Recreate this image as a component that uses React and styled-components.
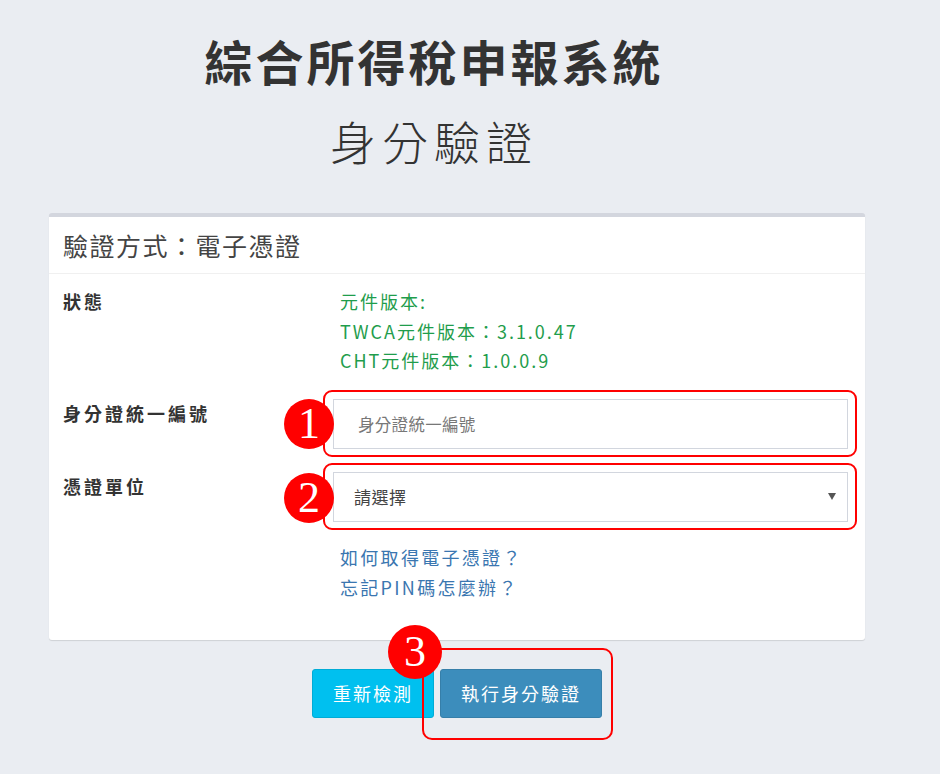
import { createGlobalStyle, styled } from "styled-components";

const GlobalStyle = createGlobalStyle`
    html, body {
        margin: 0;
        padding: 0;
        background: #eaedf2;
    }
    body {
        font-family: "Noto Sans CJK TC", "Noto Sans", "Liberation Sans", sans-serif;
        color: #333;
    }
`

const Page = styled.div`
    width: 816px;
    margin-left: 49px;
    padding-top: 30px;
    padding-bottom: 40px;
`

const Heading = styled.div`
    text-align: center;
    padding-right: 46px;
`

const Title = styled.h1`
    margin: 0;
    font-size: 48px;
    line-height: 60px;
    font-weight: 700;
    letter-spacing: 3px;
    color: #333;
`

const SubTitle = styled.h2`
    margin: 20px 0 0;
    font-size: 46px;
    line-height: 60px;
    font-weight: 300;
    letter-spacing: 6px;
    color: #333;
`

const Card = styled.div`
    margin-top: 43px;
    background: #fff;
    border-top: 4px solid #d3d6de;
    border-radius: 3px;
    box-shadow: 0 1px 1px rgba(0, 0, 0, 0.12);
`

const CardHeader = styled.div`
    height: 56px;
    display: flex;
    align-items: center;
    padding: 0 14px;
    border-bottom: 1px solid #f0f0f0;
    font-size: 25px;
    letter-spacing: 1.5px;
    color: #444;
`

const CardBody = styled.div`
    display: grid;
    grid-template-columns: 270px 1fr;
    row-gap: 23px;
    padding: 13px 17px 38px 14px;
`

const Label = styled.div`
    font-size: 18px;
    line-height: 29px;
    font-weight: 700;
    letter-spacing: 3px;
    color: #333;
`

const Static = styled.div`
    padding-left: 7px;
    font-size: 18px;
    line-height: 29.5px;
    letter-spacing: 2px;
    color: ${props => props.color || "#333"};
`

const Annotated = styled.div`
    position: relative;
    margin: -9px -9px -8px -10px;
    padding: 7px 7px 6px 8px;
    border: 2px solid #ff0000;
    border-radius: 9px;
`

const Badge = styled.div`
    position: absolute;
    left: ${props => props.left}px;
    top: ${props => props.top}px;
    width: ${props => props.size}px;
    height: ${props => props.size}px;
    border-radius: 50%;
    background: #ff0000;
    color: #fff;
    display: flex;
    align-items: center;
    justify-content: center;
    font-family: "Liberation Serif", "DejaVu Serif", serif;
    font-size: 44px;
    line-height: 1;
    z-index: 2;
`

const Input = styled.input`
    box-sizing: border-box;
    display: block;
    width: 100%;
    height: 50px;
    border: 1px solid #d2d6de;
    padding: 0 24px;
    font-family: inherit;
    font-size: 16.5px;
    letter-spacing: 0.3px;
    color: #555;
    outline: none;
    &::placeholder {
        color: #777;
    }
`

const SelectBox = styled.div`
    position: relative;
    &::after {
        content: "";
        position: absolute;
        right: 12px;
        top: 21px;
        border-left: 4px solid transparent;
        border-right: 4px solid transparent;
        border-top: 7px solid #555;
    }
`

const Select = styled.select`
    box-sizing: border-box;
    display: block;
    width: 100%;
    height: 50px;
    border: 1px solid #d2d6de;
    border-radius: 0;
    padding: 0 20px;
    background: #fff;
    appearance: none;
    font-family: inherit;
    font-size: 17px;
    letter-spacing: 0.5px;
    color: #444;
    outline: none;
`

const Links = styled.div`
    margin-top: -3px;
`

const Link = styled.a`
    display: block;
    padding-left: 7px;
    font-size: 18px;
    line-height: 30px;
    letter-spacing: 2.3px;
    color: #3a76b0;
    text-decoration: none;
`

const ButtonRow = styled.div`
    display: flex;
    justify-content: center;
    gap: 6px;
    margin-top: 29px;
`

const Button = styled.button`
    height: 49px;
    padding: 0 20px;
    border: 1px solid ${props => props.primary ? "#367fa9" : "#00acd6"};
    border-radius: 3px;
    background: ${props => props.primary ? "#3c8dbc" : "#00c0ef"};
    color: #fff;
    font-family: inherit;
    font-size: 18px;
    letter-spacing: 2px;
    cursor: pointer;
`

const ButtonMark = styled.div`
    position: relative;
    z-index: 1;
    display: flex;
    margin: -21px -11px -22px -18px;
    padding: 19px 9px 20px 16px;
    border: 2px solid #ff0000;
    border-radius: 10px;
`

export default function App() {
    return (
        <>
            <GlobalStyle />
            <Page>
                <Heading>
                    <Title>綜合所得稅申報系統</Title>
                    <SubTitle>身分驗證</SubTitle>
                </Heading>
                <Card>
                    <CardHeader>驗證方式：電子憑證</CardHeader>
                    <CardBody>
                        <Label>狀態</Label>
                        <div>
                            <Static color="#1f9d4c">元件版本:</Static>
                            <Static color="#1f9d4c">TWCA元件版本：3.1.0.47</Static>
                            <Static color="#1f9d4c">CHT元件版本：1.0.0.9</Static>
                        </div>

                        <Label>身分證統一編號</Label>
                        <Annotated>
                            <Badge left={-41} top={7} size={50}>1</Badge>
                            <Input placeholder="身分證統一編號" />
                        </Annotated>

                        <Label>憑證單位</Label>
                        <Annotated>
                            <Badge left={-41} top={8} size={50}>2</Badge>
                            <SelectBox>
                                <Select defaultValue="">
                                    <option value="">請選擇</option>
                                </Select>
                            </SelectBox>
                        </Annotated>

                        <div />
                        <Links>
                            <Link href="#">如何取得電子憑證？</Link>
                            <Link href="#">忘記PIN碼怎麼辦？</Link>
                        </Links>
                    </CardBody>
                </Card>
                <ButtonRow>
                    <Button>重新檢測</Button>
                    <ButtonMark>
                        <Badge left={-36} top={-25} size={54}>3</Badge>
                        <Button primary>執行身分驗證</Button>
                    </ButtonMark>
                </ButtonRow>
            </Page>
        </>
    )
}
